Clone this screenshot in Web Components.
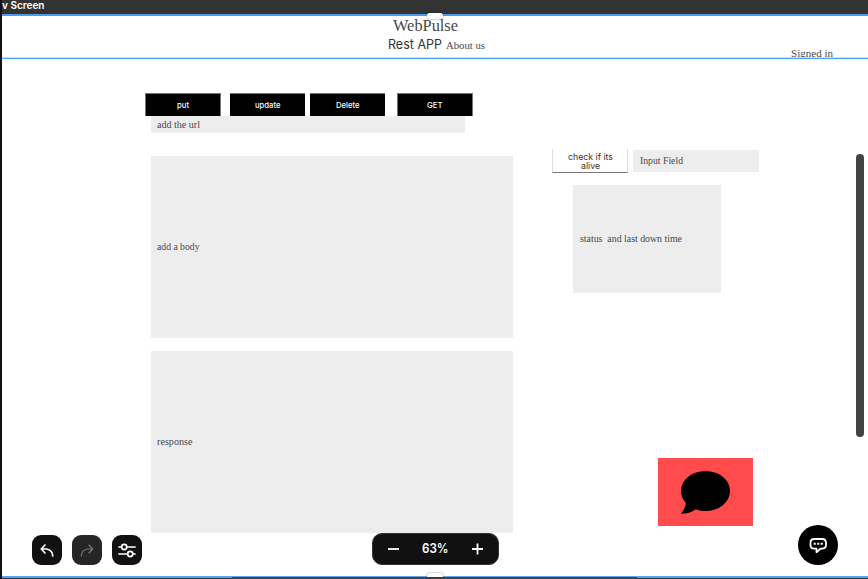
<!DOCTYPE html>
<html lang="en"><head><meta charset="utf-8"><title>WebPulse</title>
<style>html,body{margin:0;width:868px;height:579px;overflow:hidden;background:#fff}</style></head>
<body><design-editor></design-editor>
<script>
const define=(name,html,ready)=>customElements.define(name,class extends HTMLElement{
  constructor(){super();this.attachShadow({mode:'open'}).innerHTML=html}
  connectedCallback(){if(ready)ready(this)}
});

/* A line of text spread to a given advance width (w) at a font size (s). */
define('fit-text',`<style>:host{display:block;white-space:pre;font-family:"Liberation Serif",serif;color:#484848;line-height:1}
:host([sans]){font-family:Inter,sans-serif}span{display:inline-block;transform-origin:0 50%}</style><span><slot></slot></span>`,el=>{
  const w=+el.getAttribute('w');el.style.fontSize=el.getAttribute('s')+'px';el.style.width=w+'px';
  const s=el.shadowRoot.querySelector('span');
  const n=s.getBoundingClientRect().width;
  if(n)s.style.transform='scaleX('+(w/n)+')';
});

define('field-box',`<style>:host{display:flex;align-items:center;box-sizing:border-box;padding-left:6.5px;background:#ededed}</style><slot></slot>`);
define('action-button',`<style>:host{display:flex;align-items:center;justify-content:center;box-sizing:border-box;width:75px;height:23px;background:#000;border-top:1px solid #777}
:host([edge]){width:76px;border-left:1px solid #777;border-right:1px solid #777}::slotted(fit-text){color:#fff;font-weight:500}</style><slot></slot>`);
define('check-button',`<style>:host{display:flex;flex-direction:column;align-items:center;box-sizing:border-box;width:76px;height:24px;padding-top:3px;border:1px solid #ddd;border-top:0;border-bottom-color:#777;background:#fff}
::slotted(fit-text){height:9px;line-height:9px;color:#333}</style><slot></slot>`);
define('drag-handle',`<style>:host{display:block;width:16px;height:6px;border-radius:2.5px;background:#fff;box-shadow:0 0 2px #0008}</style>`);

define('site-header',`<style>:host{display:grid;grid-template-columns:386px 1fr 77.4px;height:41px;background:#fff;overflow:hidden}
.mid{padding-top:1px}.brand{margin-left:5px;height:18px}.nav{display:flex;align-items:flex-start;gap:4px;height:18px}
.rest{margin-top:3px;color:#333}.about{margin-top:5px}.signed{padding-top:32px}</style>
<div></div><div class="mid"><fit-text class="brand" w="65" s="17">WebPulse</fit-text>
<div class="nav"><fit-text class="rest" sans w="54" s="13">Rest APP</fit-text><fit-text class="about" w="39" s="11">About us</fit-text></div></div>
<div class="signed"><fit-text w="42" s="11">Signed in</fit-text></div>`);

define('page-body',`<style>:host{display:grid;grid-template-columns:368px 207px;column-gap:39px;padding:34px 0 0 143px;height:485px;box-sizing:border-box}
.buttons{display:flex;height:23px}.left,.right{display:flex;flex-direction:column}
.left field-box{margin-left:6px;padding-left:6px}.url{width:314px;height:17px}.big{width:362px;height:182px}
.row{display:flex;gap:5px;margin-top:56px}.row field-box{width:126px;height:22px;margin-top:.5px}
.status{width:148px;height:108.5px;margin:11.5px 0 0 21px}
.red{width:95px;height:68px;margin:165px 0 0 106px;background:#ff4b4b}svg{display:block}</style>
<div class="left"><div class="buttons">
<action-button edge><fit-text sans w="12" s="8">put</fit-text></action-button>
<action-button style="margin-left:9px"><fit-text sans w="25.5" s="8">update</fit-text></action-button>
<action-button style="margin-left:5px"><fit-text sans w="23.5" s="8">Delete</fit-text></action-button>
<action-button edge style="margin-left:12px"><fit-text sans w="15.5" s="8">GET</fit-text></action-button></div>
<field-box class="url"><fit-text w="43" s="10">add the url</fit-text></field-box>
<field-box class="big" style="margin-top:23px"><fit-text w="42.5" s="10">add a body</fit-text></field-box>
<field-box class="big" style="margin-top:13px"><fit-text w="35.5" s="10">response</fit-text></field-box></div>
<div class="right"><div class="row"><check-button><fit-text sans w="45" s="9">check if its</fit-text><fit-text sans w="19" s="9">alive</fit-text></check-button>
<field-box><fit-text w="43" s="10">Input Field</fit-text></field-box></div>
<field-box class="status"><fit-text w="102" s="10">status  and last down time</fit-text></field-box>
<div class="red"><svg width="95" height="68" viewBox="0 0 95 68"><ellipse cx="47.5" cy="33" rx="24.5" ry="20"/><path d="M28 43Q28 50 23 55.5Q31 56.5 38 51L45 46Z"/></svg></div></div>`);

define('tool-button',`<style>:host{display:grid;place-items:center;width:30px;height:30px;border-radius:9px;background:#111;color:#fff}
:host([dim]){background:#262626;color:#777}</style><slot></slot>`);
define('tool-row',`<style>:host{display:flex;gap:10px}svg{display:block;fill:none;stroke:currentColor;stroke-width:1.7;stroke-linecap:round;stroke-linejoin:round}</style>
<tool-button><svg width="30" height="30"><path d="M13 10L9.3 14L13 18M9.8 14H14.5Q20.5 15 20.7 21"/></svg></tool-button>
<tool-button dim><svg width="30" height="30" style="stroke-width:1.2"><path d="M17 10L20.7 14L17 18M20.2 14H15.5Q9.5 15 9.3 21"/></svg></tool-button>
<tool-button><svg width="30" height="30"><path d="M7 12H9.5M15 12H23M7 19H15.5M21 19H23"/><circle cx="12.2" cy="12" r="2.6"/><circle cx="18.2" cy="19" r="2.6"/></svg></tool-button>`);
define('zoom-control',`<style>:host{display:flex;align-items:center;justify-content:space-between;box-sizing:border-box;width:127px;height:32px;padding:0 15px;border-radius:10px;background:#111;border:1px solid #333}
svg{fill:none;stroke:#fff;stroke-width:1.8;display:block}fit-text{color:#fff;font-weight:600;margin-bottom:2px}</style>
<svg width="11" height="12"><path d="M0 6H11"/></svg><fit-text sans w="26.5" s="13">63%</fit-text><svg width="11" height="12"><path d="M0 6H11M5.5 .5V11.5"/></svg>`);
define('chat-button',`<style>:host{display:block;width:40px;height:40px;border-radius:50%;background:#000}svg{display:block}</style>
<svg width="40" height="40" fill="none" stroke="#fff" stroke-width="1.8" stroke-linejoin="round"><path d="M16 14H24Q28 14 28 18V20Q28 23.5 24 23.7H22.5L18.5 27.2V23.7H16Q12.5 23.5 12.5 20V18Q12.5 14 16 14Z"/><path d="M15.7 18.8H17.7M19.2 18.8H21.2M22.7 18.8H24.7" stroke-width="2"/></svg>`);

define('design-editor',`<style>:host{display:flex;flex-direction:column;position:relative;width:868px;height:579px;box-sizing:border-box;background:#fff;border-left:2px solid #101114;overflow:hidden}
.title{height:14px;flex:none;background:#333}.title fit-text{color:#fff;font-weight:600;line-height:11px}
.line{height:2px;flex:none;background:#4a9bea}.mid{background:linear-gradient(#c5e2fb 50%,#45a2f5 50%)}
page-body{flex:none;height:517px}.bottom{display:grid;grid-template-columns:230px 405px 1fr;height:3px;flex:none;background:linear-gradient(#55a5f0 2px,#333 2px)}
.bottom i{grid-column:2;background:linear-gradient(#60a9ee 1px,#444 1px)}
drag-handle,tool-row,zoom-control,chat-button,.thumb{position:absolute}
.h1{left:425px;top:13px}.h2{left:425px;top:573px;height:4px;border-radius:2.5px 2.5px 0 0}
tool-row{left:30px;top:535px}zoom-control{left:369.6px;top:533px}chat-button{left:796px;top:525px}.thumb{left:854px;top:154px;width:8px;height:283px;border-radius:4px;background:#424242}</style>
<div class="title"><fit-text sans w="42.5" s="10.5">v Screen</fit-text></div><div class="line"></div><site-header></site-header><div class="line mid"></div>
<page-body></page-body><div class="bottom"><i></i></div>
<drag-handle class="h1"></drag-handle><drag-handle class="h2"></drag-handle><div class="thumb"></div>
<tool-row></tool-row><zoom-control></zoom-control><chat-button></chat-button>`);
</script></body></html>
